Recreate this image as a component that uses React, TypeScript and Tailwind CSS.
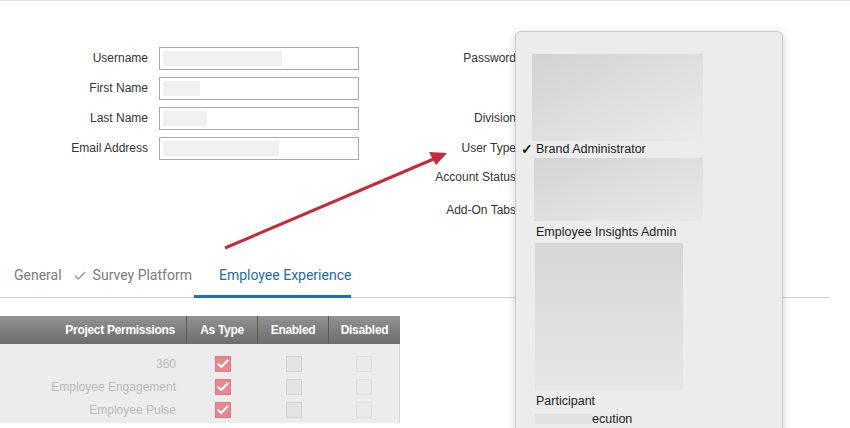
import { Check } from "lucide-react";

const leftFields = [
  { label: "Username", fill: 119 },
  { label: "First Name", fill: 37 },
  { label: "Last Name", fill: 44 },
  { label: "Email Address", fill: 116 },
];

const rows = ["360", "Employee Engagement", "Employee Pulse"];

function Box({ kind }: { kind: "checked" | "enabled" | "disabled" }) {
  if (kind === "checked") {
    return (
      <span className="flex h-4 w-4 items-center justify-center border border-[#d97b82] bg-[#e6898f]">
        <Check className="h-3.5 w-3.5 text-white" strokeWidth={3.5} />
      </span>
    );
  }
  return (
    <span
      className={
        kind === "enabled"
          ? "block h-4 w-4 border border-[#d2d2d2] bg-[#e4e4e4]"
          : "block h-4 w-4 border border-[#e0e0e0] bg-[#eaeaea]"
      }
    />
  );
}

export default function App() {
  return (
    <div className="relative h-[428px] w-[850px] overflow-hidden border-t border-[#e2e2e2] bg-white font-['Liberation_Sans',Arial,sans-serif] text-[12px] text-[#333]">
      {/* Form */}
      <div className="flex items-start pt-[42px]">
        <div className="grid grid-cols-[148px_200px] content-start gap-x-[11px]">
          {leftFields.map((f) => (
            <div key={f.label} className="contents">
              <div className="flex h-[30px] items-center justify-end">{f.label}</div>
              <div className="flex h-[30px] items-center">
                <div className="flex h-[23px] w-full items-center border border-[#a9a9a9] px-[3px]">
                  <span className="block h-[15px] bg-[#f0f0f0]" style={{ width: f.fill }} />
                </div>
              </div>
            </div>
          ))}
        </div>
        <div className="ml-[42px] flex w-[115px] flex-col items-end">
          <div className="flex h-[30px] items-center">Password</div>
          <div className="h-[30px]" />
          <div className="flex h-[30px] items-center">Division</div>
          <div className="flex h-[30px] items-center">User Type</div>
          <div className="flex h-[27px] items-center">Account Status</div>
          <div className="flex h-[40px] items-center">Add-On Tabs</div>
        </div>
      </div>

      {/* Tabs */}
      <div className="mt-[35px] flex w-[830px] items-end border-b border-[#cfcfcf] font-['Roboto',sans-serif] text-[14px] text-[#7a7a7a]">
        <div className="pb-[11px] pl-[14px]">General</div>
        <div className="flex items-center gap-[6px] pb-[11px] pl-[11px]">
          <Check className="h-[14px] w-[14px] text-[#9a9a9a]" strokeWidth={2.5} />
          <span>Survey Platform</span>
        </div>
        <div className="-mb-px ml-[2px] border-b-[3px] border-[#1f6fb4] pb-[9px] pl-[25px] text-[#1f6aa8]">
          Employee Experience
        </div>
      </div>

      {/* Permissions table */}
      <div className="mt-[18px] w-[400px]">
        <div className="grid h-[28px] grid-cols-[187px_71px_71px_71px] bg-linear-to-b from-[#939393] to-[#6c6c6c] text-[12px] font-bold tracking-[-0.3px] text-white">
          <div className="flex items-center justify-end border-r border-[#5a5a5a] pr-[11px]">Project Permissions</div>
          <div className="flex items-center justify-center border-r border-[#5a5a5a]">As Type</div>
          <div className="flex items-center justify-center border-r border-[#5a5a5a]">Enabled</div>
          <div className="flex items-center justify-center">Disabled</div>
        </div>
        <div className="border-r border-[#d6d6d6] bg-[#ececec] pt-[8px] pb-[2px] text-[12px] text-[#b9b9b9]">
          {rows.map((r) => (
            <div key={r} className="grid h-[23px] grid-cols-[187px_71px_71px_70px] items-center">
              <div className="pr-[11px] text-right">{r}</div>
              <div className="flex justify-center">
                <Box kind="checked" />
              </div>
              <div className="flex justify-center">
                <Box kind="enabled" />
              </div>
              <div className="flex justify-center">
                <Box kind="disabled" />
              </div>
            </div>
          ))}
        </div>
      </div>

      {/* Annotation arrow */}
      <svg className="pointer-events-none absolute left-0 top-0" width="850" height="428">
        <line x1="225" y1="247" x2="436" y2="157" stroke="#c62a3a" strokeWidth="3" />
        <polygon points="447,152 429,151 436,164" fill="#c62a3a" />
      </svg>

      {/* User type dropdown menu */}
      <div className="absolute left-[515px] top-[30px] h-[420px] w-[268px] rounded-t-[6px] border border-[#c9c9c9] bg-[#ececec] pl-[5px] pt-[22px] text-[12.5px] text-[#222] shadow-[0_2px_10px_rgba(0,0,0,0.18)]">
        <div className="ml-[11px] h-[87px] w-[171px] bg-linear-to-br from-[#d2d2d2] to-[#ebebeb]" />
        <div className="flex h-[17px] items-center">
          <span className="w-[15px] text-[14px] font-bold">✓</span>
          <span>Brand Administrator</span>
        </div>
        <div className="ml-[13px] h-[63px] w-[169px] bg-linear-to-br from-[#d4d4d4] to-[#e9e9e9]" />
        <div className="flex h-[22px] items-center pl-[15px]">Employee Insights Admin</div>
        <div className="ml-[14px] h-[147px] w-[148px] bg-linear-to-b from-[#d6d6d6] to-[#e6e6e6]" />
        <div className="flex h-[23px] items-center pl-[15px]">Participant</div>
        <div className="flex h-[12px] items-center">
          <span className="ml-[14px] h-[10px] w-[57px] bg-[#e2e2e2]" />
          <span>ecution</span>
        </div>
      </div>
    </div>
  );
}
